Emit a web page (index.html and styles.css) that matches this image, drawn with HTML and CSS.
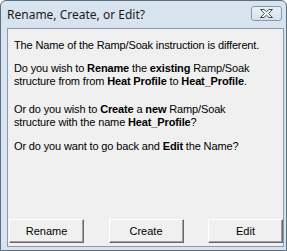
FILE: index.html
```html
<!DOCTYPE html>
<html>
<head>
<meta charset="utf-8">
<link rel="stylesheet" href="styles.css">
</head>
<body>
<div class="window">
  <div class="titlebar">
    <span class="title">Rename, Create, or Edit?</span>
    <div class="close">
      <svg width="17" height="11" viewBox="0 0 17 11">
        <path d="M2.5 1.5 L6 1.5 L8.5 3.8 L11 1.5 L14.5 1.5 L10.5 5.5 L14.5 9.5 L11 9.5 L8.5 7.2 L6 9.5 L2.5 9.5 L6.5 5.5 Z" fill="#ffffff" stroke="#3c4a5c" stroke-width="1" stroke-linejoin="round"/>
      </svg>
    </div>
  </div>
  <div class="client">
    <div class="messages">
      <p class="msg first"><span class="line">The Name of the Ramp/Soak instruction is different.</span></p>
      <p class="msg">
        <span class="line">Do you wish to <b>Rename</b> the <b>existing</b> Ramp/Soak</span>
        <span class="line">structure from from <b>Heat Profile</b> to <b>Heat_Profile</b>.</span>
      </p>
      <p class="msg third">
        <span class="line">Or do you wish to <b>Create</b> a <b>new</b> Ramp/Soak</span>
        <span class="line">structure with the name <b>Heat_Profile</b>?</span>
      </p>
      <p class="msg fourth"><span class="line">Or do you want to go back and <b>Edit</b> the Name?</span></p>
    </div>
    <div class="buttons">
      <button class="btn">Rename</button>
      <button class="btn">Create</button>
      <button class="btn">Edit</button>
    </div>
  </div>
</div>
</body>
</html>
```
FILE: styles.css
```css
html, body {
  margin: 0;
  padding: 0;
  background: #ffffff;
}
.window {
  width: 287px;
  height: 251px;
  box-sizing: border-box;
  background: #d8e3f0;
  border: 1px solid #5d6d80;
  border-radius: 6px 6px 0 0;
  display: flex;
  flex-direction: column;
  overflow: hidden;
}
.titlebar {
  height: 27px;
  flex: none;
  display: flex;
  align-items: center;
  justify-content: space-between;
  padding: 0 3px 0 6px;
}
.title {
  font-family: "Noto Sans", "Open Sans", sans-serif;
  font-size: 12px;
  color: #1b1b1b;
  margin-top: -1px;
}
.close {
  width: 31px;
  height: 15px;
  box-sizing: border-box;
  border: 1px solid #8796aa;
  border-radius: 3px;
  background: linear-gradient(#e9eff7, #d6e0ed);
  display: flex;
  align-items: center;
  justify-content: center;
  margin-top: -2px;
  margin-right: 1px;
}
.close svg {
  display: block;
}
.client {
  flex: 1;
  margin: 0 2px 3px 6px;
  background: #f0f0f0;
  border: 1px solid #8a99ad;
  display: flex;
  flex-direction: column;
  justify-content: space-between;
  font-family: "Liberation Sans", Arial, sans-serif;
  font-size: 11px;
  color: #000000;
}
.messages {
  padding: 10px 8px 0 6px;
}
.msg {
  margin: 0;
  line-height: 13px;
  letter-spacing: -0.14px;
}
.line {
  display: block;
  white-space: nowrap;
}
.msg.first {
  margin-bottom: 10px;
}
.msg.third {
  margin-top: 15px;
}
.msg.fourth {
  margin-top: 11px;
}
.buttons {
  display: flex;
  justify-content: space-between;
  padding: 0 0 3px 1px;
}
.btn {
  width: 75px;
  height: 24px;
  padding: 0;
  margin: 0;
  font-family: "Liberation Sans", Arial, sans-serif;
  font-size: 11px;
  color: #000000;
  background: #f0f0f0;
  border: 1px solid;
  border-color: #ffffff #696969 #696969 #ffffff;
  box-shadow: inset -1px -1px 0 #a0a0a0;
}
```
